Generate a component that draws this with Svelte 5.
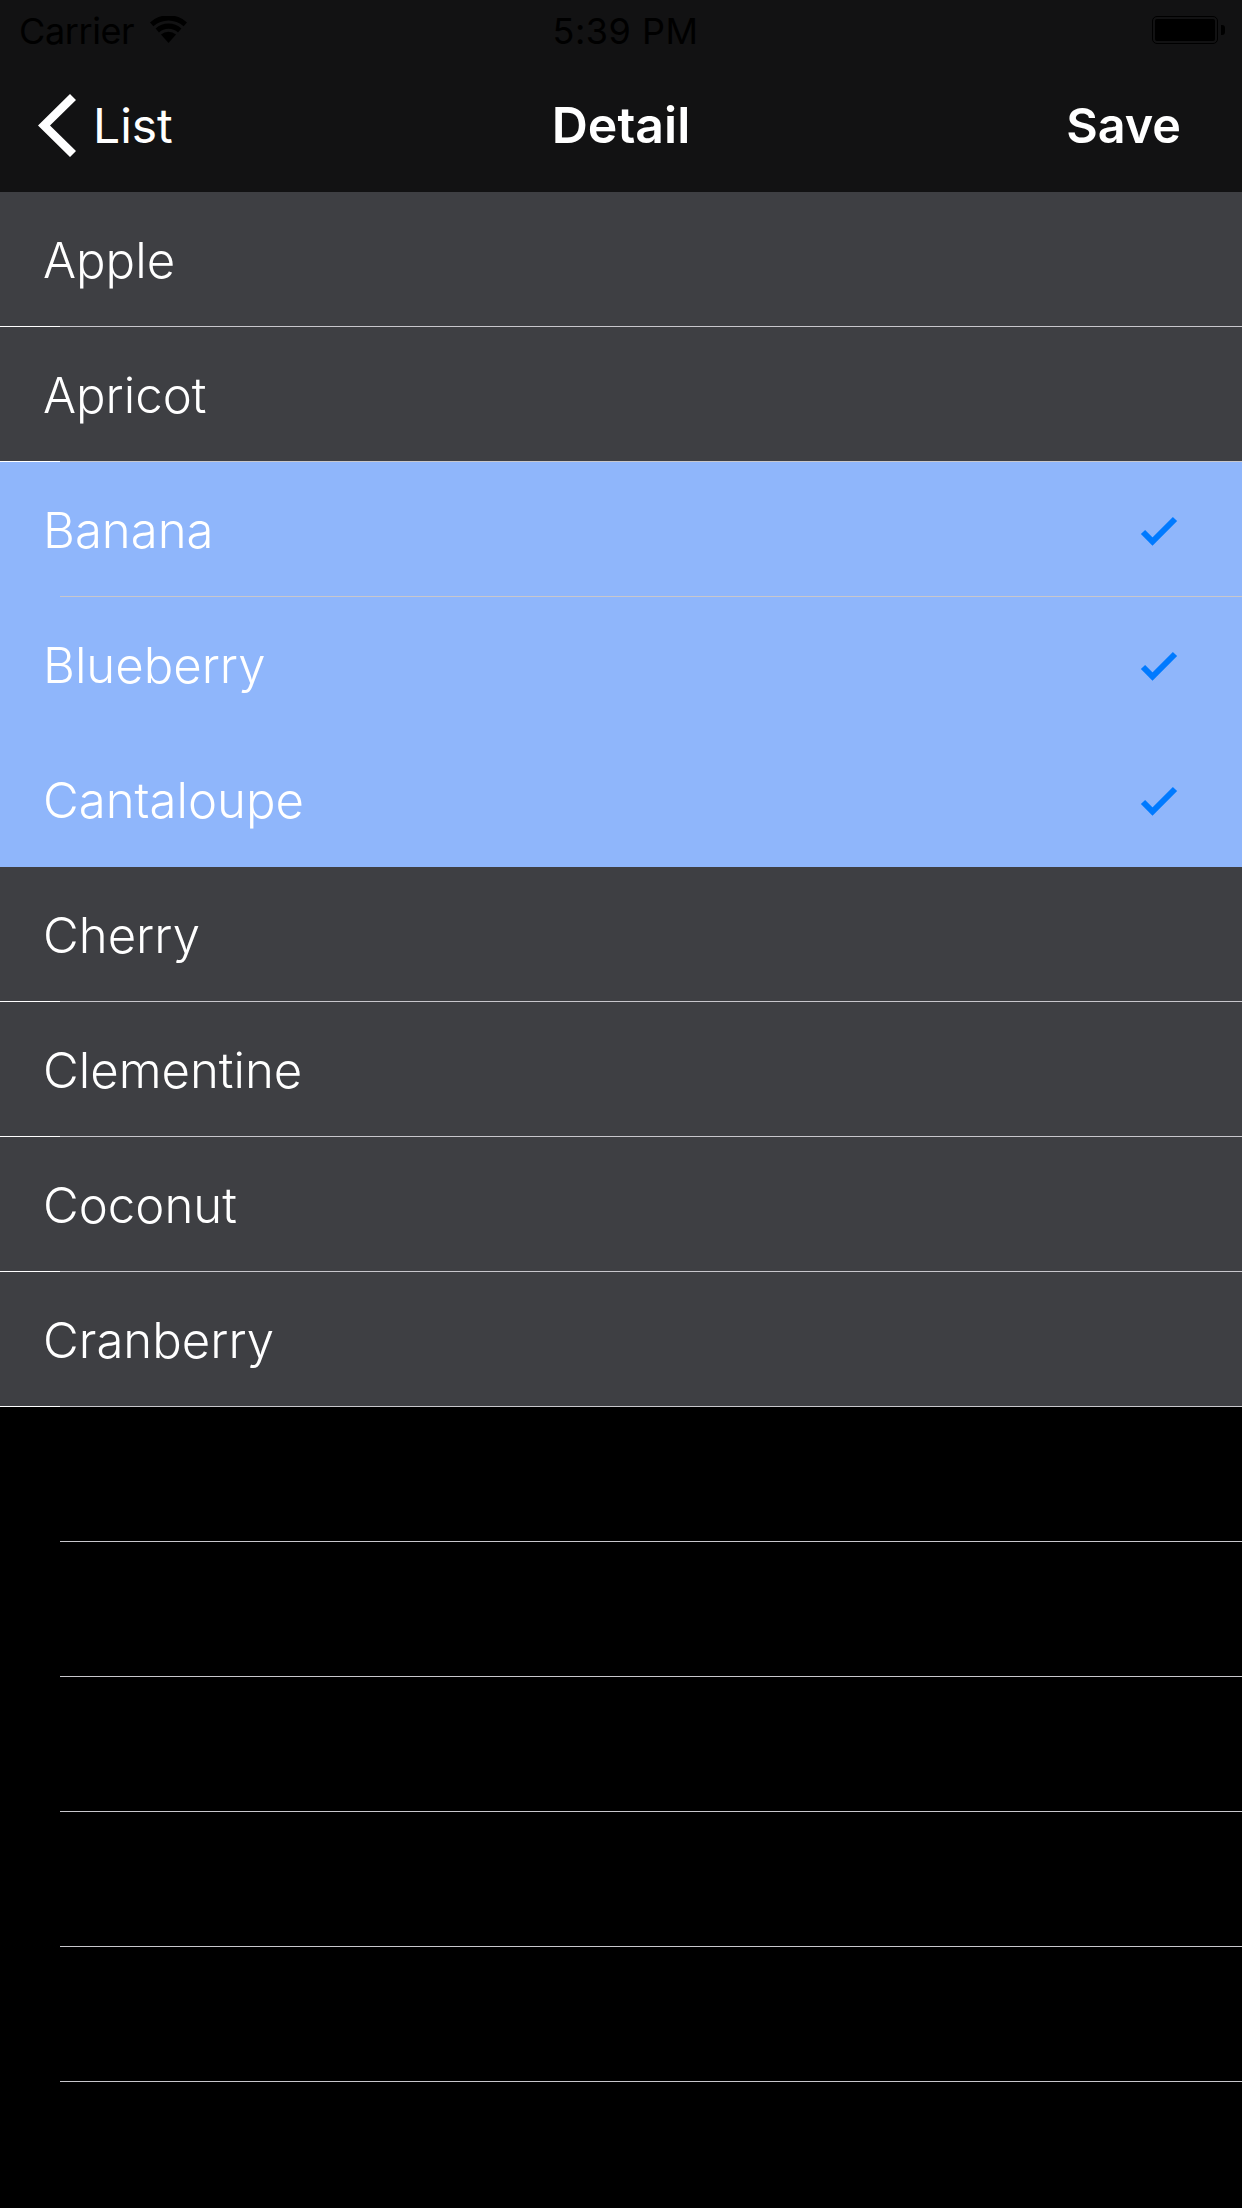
<script>
    const fruits = [
        { name: "Apple", sep: "full" },
        { name: "Apricot", sep: "full" },
        { name: "Banana", selected: true, sep: "inset" },
        { name: "Blueberry", selected: true, sep: "none" },
        { name: "Cantaloupe", selected: true, sep: "none" },
        { name: "Cherry", sep: "full" },
        { name: "Clementine", sep: "full" },
        { name: "Coconut", sep: "full" },
        { name: "Cranberry", sep: "full" }
    ];
    const emptyRows = [1, 2, 3, 4, 5];
</script>

<div class="screen">
    <header class="top">
        <div class="status">
            <div class="status-left">
                <span class="carrier">Carrier</span>
                <svg class="wifi" width="37" height="27" viewBox="0 0 37 27">
                    <path d="M18.5 27 L11 18.6 A11 11 0 0 1 26 18.6 Z" fill="#000" />
                    <path d="M5.6 12.6 A19 19 0 0 1 31.4 12.6 L28 16.4 A14 14 0 0 0 9 16.4 Z" fill="#000" />
                    <path d="M0 6.4 A27.5 27.5 0 0 1 37 6.4 L33.6 10.2 A22.5 22.5 0 0 0 3.4 10.2 Z" fill="#000" />
                </svg>
            </div>
            <span class="time">5:39 PM</span>
            <div class="battery">
                <div class="battery-body"><div class="battery-fill"></div></div>
                <div class="battery-nub"></div>
            </div>
        </div>
        <nav class="nav">
            <div class="back">
                <svg width="38" height="63" viewBox="0 0 38 63">
                    <polygon points="0,31.5 32,0 38,6 12,31.5 38,57 32,63" fill="#fff" />
                </svg>
                <span>List</span>
            </div>
            <div class="title">Detail</div>
            <div class="save">Save</div>
        </nav>
    </header>

    <div class="list">
        {#each fruits as fruit}
            <div class="row" class:selected={fruit.selected}>
                <div class="cell">
                    <span>{fruit.name}</span>
                    {#if fruit.selected}
                        <svg class="check" width="38" height="30" viewBox="0 0 38 30">
                            <polyline points="3,16 12.5,25.5 35,3" fill="none" stroke="#007aff" stroke-width="6" />
                        </svg>
                    {/if}
                </div>
                {#if fruit.sep === "full"}
                    <div class="sep white"><div class="line"></div></div>
                {:else if fruit.sep === "inset"}
                    <div class="sep"><div class="line"></div></div>
                {:else}
                    <div class="sep"></div>
                {/if}
            </div>
        {/each}
        {#each emptyRows as n}
            <div class="row empty">
                <div class="cell"></div>
                <div class="sep"><div class="line"></div></div>
            </div>
        {/each}
    </div>
</div>

<style>
    :global(body) {
        background: #000;
    }

    .screen {
        height: 2208px;
        background: #000;
        font-family: Inter, "Liberation Sans", sans-serif;
        color: #fff;
        overflow: hidden;
    }

    .top {
        height: 192px;
        background: #121213;
    }

    .status {
        box-sizing: border-box;
        height: 60px;
        display: grid;
        grid-template-columns: 1fr auto 1fr;
        align-items: center;
        padding: 2px 17px 0 19px;
        font-size: 36px;
        color: #000;
    }

    .status-left {
        display: flex;
        align-items: center;
        gap: 16px;
    }

    .carrier {
        letter-spacing: -0.4px;
    }

    .wifi {
        margin-top: -3px;
    }

    .time {
        margin-left: 7px;
        letter-spacing: 0.5px;
    }

    .battery {
        justify-self: end;
        display: flex;
        align-items: center;
        margin-top: -2px;
    }

    .battery-body {
        box-sizing: border-box;
        width: 66px;
        height: 28px;
        padding: 2px;
        border: 1px solid #000;
        border-radius: 5px;
    }

    .battery-fill {
        height: 100%;
        border-radius: 2px;
        background: #000;
    }

    .battery-nub {
        width: 4px;
        height: 10px;
        margin-left: 3px;
        border-radius: 0 3px 3px 0;
        background: #000;
    }

    .nav {
        height: 130px;
        display: grid;
        grid-template-columns: 1fr auto 1fr;
        align-items: center;
        padding: 0 38px 2px;
        font-size: 48px;
    }

    .back {
        display: flex;
        align-items: center;
        gap: 17px;
    }

    .title {
        font-size: 50px;
        font-weight: 600;
    }

    .save {
        justify-self: end;
        margin-right: 23px;
        font-size: 48.5px;
        font-weight: 600;
    }

    .row {
        height: 135px;
        display: flex;
        flex-direction: column;
        background: #3e3f43;
    }

    .row.selected {
        background: #8fb6fb;
    }

    .row.empty {
        background: #000;
    }

    .cell {
        flex: 1;
        display: flex;
        align-items: center;
        justify-content: space-between;
        padding: 1px 64px 0 43px;
        font-size: 49.1px;
        font-weight: 350;
    }

    .check {
        margin-top: 2px;
    }

    .sep {
        height: 1px;
    }

    .sep.white {
        background: #fff;
    }

    .line {
        height: 1px;
        margin-left: 60px;
        background: #c8c7cc;
    }
</style>
